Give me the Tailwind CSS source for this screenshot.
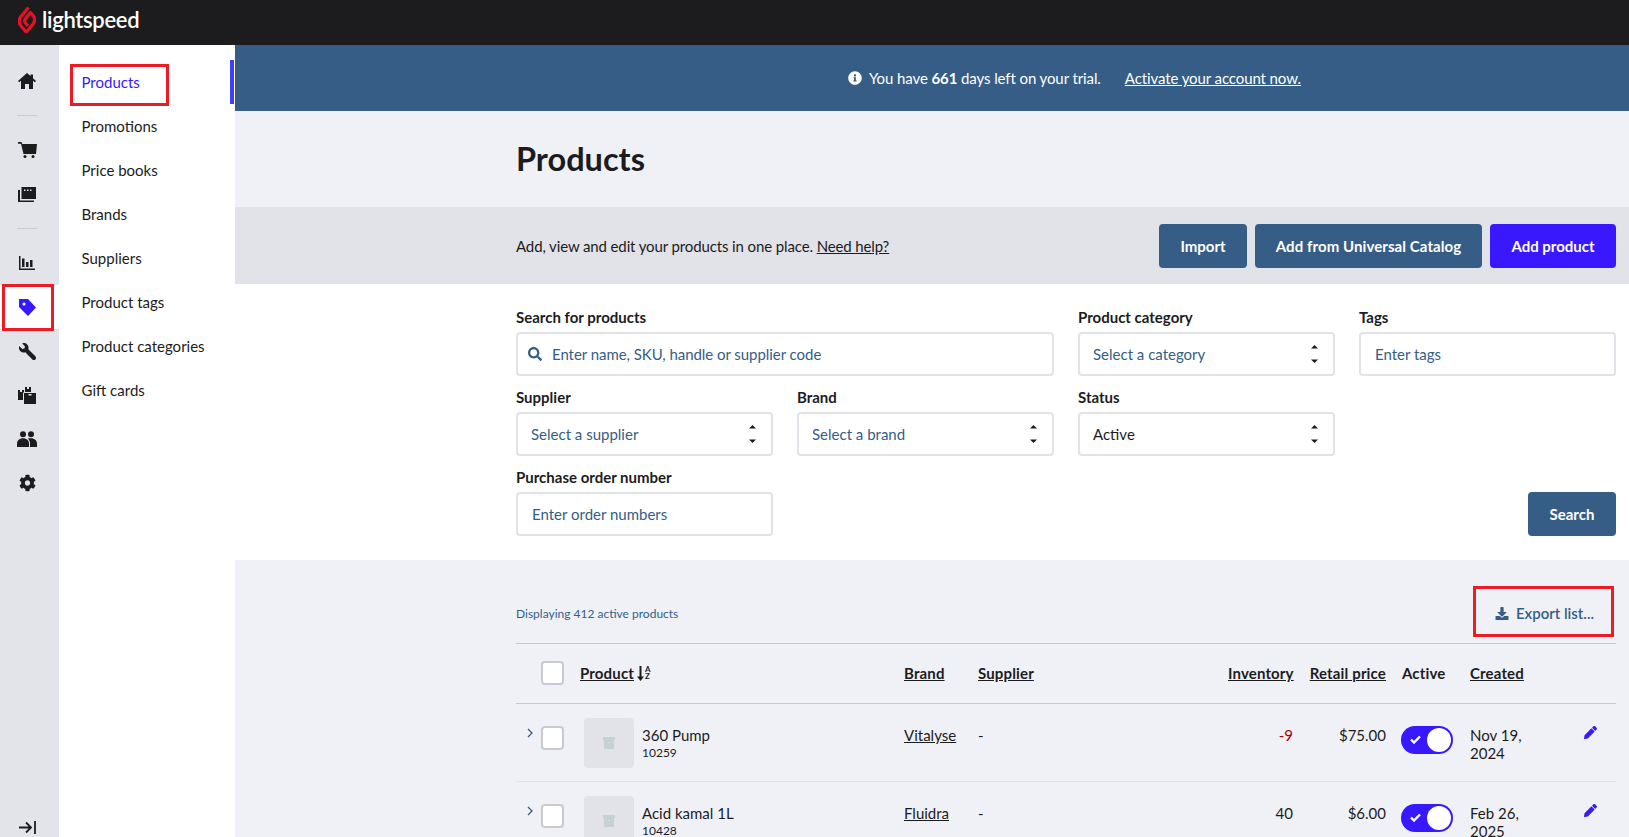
<!DOCTYPE html>
<html lang="en">
<head>
  <meta charset="UTF-8">
  <title>Products</title>
  <script src="https://cdn.jsdelivr.net/npm/@tailwindcss/browser@4"></script>
</head>
<body class="h-[837px] overflow-hidden bg-white font-[Lato,sans-serif] text-[15px] text-[#1c1c1e]">
  <!-- top bar -->
  <header class="h-[45px] bg-[#1c1c1e] flex items-center pl-[18px]">
    <svg class="w-[18px] h-[28px] mt-[-5px]" viewBox="0 0 18 28" fill="none" stroke="#e81123" stroke-width="3.200" stroke-linejoin="round">
      <path d="M10.500 1.500 3 10.500c-2.600 3.200-2.200 7 .3 9.800l5.200 6.200"/>
      <path d="M8 26.500l6.700-8c2.600-3.100 2.400-6.600 0-9.400l-2.200-2.600-5 6.200c-1.200 1.600-1 3.200 0 4.400l2.400 2.900"/>
    </svg>
    <span class="ml-[6px] text-[22px] leading-none font-semibold text-white tracking-[-0.3px] mt-[-5px]">lightspeed</span>
  </header>

  <div class="flex h-[792px]">
    <!-- icon rail -->
    <nav class="relative w-[59px] shrink-0 bg-[#e3e4e9] pt-[14px] text-[#1c1c1e]">
      <div class="h-[44px] flex items-center justify-center pr-[5px]">
        <svg class="w-[18px] h-[16px]" viewBox="0 0 18 16" fill="currentColor"><path d="M9 0 0 8l1.200 1.200L3 7.700V16h4v-5h4v5h4V7.700l1.800 1.500L18 8l-3-2.700V1.500h-2.500v1.600z"/></svg>
      </div>
      <div class="ml-[17px] mr-[22px] my-[12px] h-px bg-[#c9cad0]"></div>
      <div class="h-[44px] flex items-center justify-center pr-[5px]">
        <svg class="w-[19px] h-[16px]" viewBox="0 0 19 16" fill="currentColor"><path d="M0 0h3.500l.8 2H19l-1 10H5.500L3 1.800H0z"/><circle cx="7" cy="14.500" r="1.500"/><circle cx="15" cy="14.500" r="1.500"/></svg>
      </div>
      <div class="h-[44px] flex items-center justify-center pr-[5px]">
        <svg class="w-[18px] h-[15px]" viewBox="0 0 18 15" fill="currentColor"><path fill-rule="evenodd" d="M3.500 0H18v12H3.500zM6 2.500V4h1.500V2.500zM9 2.500V4h1.500V2.500zM12 2.500V4h1.500V2.500z"/><path d="M0 3h2v10.500h14V15H0z"/></svg>
      </div>
      <div class="ml-[17px] mr-[22px] my-[12px] h-px bg-[#c9cad0]"></div>
      <div class="h-[44px] flex items-center justify-center pr-[5px]">
        <svg class="w-[16px] h-[14px]" viewBox="0 0 16 14" fill="currentColor"><path d="M0 0h1.500v12.500H16V14H0zM3 2.500h2.500V11H3zM7 6h2.500v5H7zM11 4h2.500v7H11z"/></svg>
      </div>
      <div class="h-[44px] bg-white flex items-center justify-center pr-[5px]">
        <svg class="w-[17px] h-[17px]" viewBox="0 0 17 17" fill="#3719ff"><path fill-rule="evenodd" d="M0 0h9l8 8.500L9 17 0 8zM5 3.500a1.500 1.500 0 1 0 0 3 1.500 1.500 0 0 0 0-3z"/></svg>
      </div>
      <div class="h-[44px] flex items-center justify-center pr-[5px]">
        <svg class="w-[17px] h-[17px]" viewBox="0 0 512 512" fill="currentColor"><g transform="matrix(-1 0 0 1 512 0)"><path d="M507.730 109.100c-2.240-9.030-13.540-12.090-20.120-5.510l-74.360 74.360-67.880-11.310-11.310-67.880 74.360-74.360c6.620-6.620 3.430-17.900-5.660-20.160-47.380-11.740-99.550.91-136.580 37.930-39.640 39.640-50.550 97.100-34.050 147.200L18.740 402.760c-24.990 24.990-24.990 65.510 0 90.500 24.990 24.990 65.510 24.990 90.500 0l213.210-213.210c50.120 16.710 107.470 5.680 147.370-34.220 37.070-37.070 49.700-89.320 37.910-136.730z"/></g></svg>
      </div>
      <div class="h-[44px] flex items-center justify-center pr-[5px]">
        <svg class="w-[18px] h-[17px]" viewBox="0 0 18 17" fill="currentColor"><path d="M0 3h2v2h2V3h2v2.500H5V13H0zM7 0h2v2h2V0h2v5H7z"/><path fill-rule="evenodd" d="M6 6h12v11H6zM10.500 7v1.500h3V7z"/></svg>
      </div>
      <div class="h-[44px] flex items-center justify-center pr-[5px]">
        <svg class="w-[20px] h-[16px]" viewBox="0 0 20 16" fill="currentColor"><circle cx="6" cy="3.200" r="3"/><circle cx="14" cy="3.200" r="3"/><path d="M0 16v-3.500C0 9.500 2.500 7.200 6 7.200s6 2.300 6 5.300V16z"/><path d="M13 16v-3.500c0-2-.8-3.700-2.200-4.900.9-.3 2-.4 3.200-.4 3.500 0 6 2.300 6 5.300V16z"/></svg>
      </div>
      <div class="h-[44px] flex items-center justify-center pr-[5px]">
        <svg class="w-[17px] h-[18px]" viewBox="0 0 512 512" fill="currentColor"><path d="M487.400 315.700l-42.600-24.600c4.300-23.200 4.300-47 0-70.200l42.600-24.600c4.900-2.800 7.100-8.600 5.500-14-11.100-35.600-30-67.800-54.700-94.600-3.800-4.100-10-5.100-14.800-2.300L380.800 110c-17.900-15.400-38.500-27.300-60.800-35.100V25.800c0-5.600-3.900-10.500-9.400-11.700-36.700-8.200-74.300-7.800-109.200 0-5.500 1.200-9.400 6.100-9.400 11.700V75c-22.200 7.900-42.800 19.800-60.800 35.100L88.700 85.500c-4.900-2.800-11-1.900-14.800 2.300-24.700 26.700-43.600 58.900-54.700 94.600-1.700 5.400.6 11.200 5.500 14L67.300 221c-4.300 23.200-4.300 47 0 70.200l-42.600 24.600c-4.900 2.800-7.100 8.600-5.500 14 11.100 35.600 30 67.800 54.700 94.600 3.800 4.100 10 5.100 14.800 2.300l42.600-24.600c17.900 15.400 38.500 27.300 60.800 35.100v49.200c0 5.600 3.900 10.500 9.400 11.700 36.700 8.200 74.300 7.800 109.200 0 5.500-1.200 9.400-6.100 9.400-11.700v-49.200c22.200-7.900 42.800-19.800 60.800-35.100l42.600 24.600c4.900 2.800 11 1.900 14.800-2.300 24.700-26.700 43.600-58.900 54.700-94.600 1.500-5.500-.7-11.300-5.600-14.100zM256 336c-44.100 0-80-35.900-80-80s35.900-80 80-80 80 35.900 80 80-35.900 80-80 80z"/></svg>
      </div>
      <div class="absolute left-0 right-0 bottom-[3px] flex justify-center pr-[5px]">
        <svg class="w-[17px] h-[13px]" viewBox="0 0 17 13" fill="none" stroke="currentColor" stroke-width="1.800"><path d="M0 6.500h11M7 1.500l5 5-5 5"/><path d="M16 0v13"/></svg>
      </div>
      <div class="absolute left-[2px] top-[239px] w-[52px] h-[47px] border-[3px] border-[#ed1c24]"></div>
    </nav>

    <!-- section nav -->
    <nav class="relative w-[176px] shrink-0 bg-white pt-[16px]">
      <a class="h-[44px] flex items-center pl-[22.500px] pb-[2px] text-[#3719ff]">Products</a>
      <a class="h-[44px] flex items-center pl-[22.500px] pb-[2px]">Promotions</a>
      <a class="h-[44px] flex items-center pl-[22.500px] pb-[2px]">Price books</a>
      <a class="h-[44px] flex items-center pl-[22.500px] pb-[2px]">Brands</a>
      <a class="h-[44px] flex items-center pl-[22.500px] pb-[2px]">Suppliers</a>
      <a class="h-[44px] flex items-center pl-[22.500px] pb-[2px]">Product tags</a>
      <a class="h-[44px] flex items-center pl-[22.500px] pb-[2px]">Product categories</a>
      <a class="h-[44px] flex items-center pl-[22.500px] pb-[2px]">Gift cards</a>
      <div class="absolute right-[1px] top-[15px] w-[4px] h-[44px] bg-[#3f3fff]"></div>
      <div class="absolute left-[11px] top-[19px] w-[99px] h-[42px] border-[3px] border-[#ed1c24]"></div>
    </nav>

    <!-- main -->
    <main class="flex-1 bg-[#f0f1f6] overflow-hidden">
      <div class="h-[66px] bg-[#365d86] text-white flex items-center pl-[613px] tracking-[-0.1px]">
        <svg class="w-[14px] h-[14px] mr-[7px]" viewBox="0 0 512 512" fill="currentColor"><path d="M256 8C119.043 8 8 119.083 8 256c0 136.997 111.043 248 248 248s248-111.003 248-248C504 119.083 392.957 8 256 8zm0 110c23.196 0 42 18.804 42 42s-18.804 42-42 42-42-18.804-42-42 18.804-42 42-42zm56 254c0 6.627-5.373 12-12 12h-88c-6.627 0-12-5.373-12-12v-24c0-6.627 5.373-12 12-12h12v-64h-12c-6.627 0-12-5.373-12-12v-24c0-6.627 5.373-12 12-12h64c6.627 0 12 5.373 12 12v100h12c6.627 0 12 5.373 12 12v24z"/></svg>
        <span>You have <b class="font-bold">661</b> days left on your trial.</span>
        <a class="ml-[24px] underline">Activate your account now.</a>
      </div>

      <div class="h-[96px] pl-[281px] flex items-center">
        <h1 class="text-[32.500px] font-bold leading-none">Products</h1>
      </div>

      <div class="h-[77px] bg-[#e2e3e8] pl-[281px] pr-[13px] pt-[1px] flex items-center">
        <p class="tracking-[-0.12px]">Add, view and edit your products in one place. <a class="underline">Need help?</a></p>
        <div class="ml-auto flex gap-2">
          <button class="h-[44px] w-[88px] rounded-[4px] bg-[#365d86] text-white font-bold">Import</button>
          <button class="h-[44px] w-[227px] rounded-[4px] bg-[#365d86] text-white font-bold tracking-[0.08px]">Add from Universal Catalog</button>
          <button class="h-[44px] w-[126px] rounded-[4px] bg-[#3917ff] text-white font-bold">Add product</button>
        </div>
      </div>

      <!-- filters -->
      <section class="h-[276px] bg-white pl-[281px] pr-[13px] pt-[24px]">
        <div class="grid grid-cols-4 gap-x-6 gap-y-3">
          <label class="col-span-2 block">
            <span class="block h-[20px] mb-1 font-bold leading-[18px]">Search for products</span>
            <span class="h-[44px] flex items-center border-2 border-[#e2e3e8] rounded-[4px] bg-white px-[10px]">
              <svg class="w-[14px] h-[14px] text-[#365d86] shrink-0" viewBox="0 0 512 512" fill="currentColor"><path d="M505 442.700L405.300 343c-4.500-4.500-10.600-7-17-7H372c27.600-35.300 44-79.700 44-128C416 93.100 322.900 0 208 0S0 93.100 0 208s93.100 208 208 208c48.300 0 92.700-16.400 128-44v16.300c0 6.400 2.500 12.500 7 17l99.700 99.700c9.400 9.400 24.600 9.400 33.900 0l28.300-28.300c9.400-9.400 9.400-24.600.1-34zM208 336c-70.700 0-128-57.200-128-128 0-70.700 57.200-128 128-128 70.700 0 128 57.200 128 128 0 70.700-57.200 128-128 128z"/></svg>
              <input class="ml-[10px] flex-1 outline-none tracking-[-0.05px] placeholder:text-[#365d86]" placeholder="Enter name, SKU, handle or supplier code">
            </span>
          </label>
          <label class="block">
            <span class="block h-[20px] mb-1 font-bold leading-[18px]">Product category</span>
            <span class="relative block">
              <select class="h-[44px] w-full appearance-none border-2 border-[#e2e3e8] rounded-[4px] bg-white pl-[13px] text-[#365d86]"><option>Select a category</option></select>
              <svg class="absolute right-[17px] top-[13px] w-[7px] h-[18px] text-[#1c1c1e]" viewBox="0 0 7 18" fill="currentColor"><path d="M3.500 0 7 3.500H0zM3.500 18 0 14.500h7z"/></svg>
            </span>
          </label>
          <label class="block">
            <span class="block h-[20px] mb-1 font-bold leading-[18px]">Tags</span>
            <input class="h-[44px] w-full border-2 border-[#e2e3e8] rounded-[4px] bg-white pl-[14px] outline-none placeholder:text-[#365d86]" placeholder="Enter tags">
          </label>

          <label class="block">
            <span class="block h-[20px] mb-1 font-bold leading-[18px]">Supplier</span>
            <span class="relative block">
              <select class="h-[44px] w-full appearance-none border-2 border-[#e2e3e8] rounded-[4px] bg-white pl-[13px] text-[#365d86]"><option>Select a supplier</option></select>
              <svg class="absolute right-[17px] top-[13px] w-[7px] h-[18px] text-[#1c1c1e]" viewBox="0 0 7 18" fill="currentColor"><path d="M3.500 0 7 3.500H0zM3.500 18 0 14.500h7z"/></svg>
            </span>
          </label>
          <label class="block">
            <span class="block h-[20px] mb-1 font-bold leading-[18px]">Brand</span>
            <span class="relative block">
              <select class="h-[44px] w-full appearance-none border-2 border-[#e2e3e8] rounded-[4px] bg-white pl-[13px] text-[#365d86]"><option>Select a brand</option></select>
              <svg class="absolute right-[17px] top-[13px] w-[7px] h-[18px] text-[#1c1c1e]" viewBox="0 0 7 18" fill="currentColor"><path d="M3.500 0 7 3.500H0zM3.500 18 0 14.500h7z"/></svg>
            </span>
          </label>
          <label class="block">
            <span class="block h-[20px] mb-1 font-bold leading-[18px]">Status</span>
            <span class="relative block">
              <select class="h-[44px] w-full appearance-none border-2 border-[#e2e3e8] rounded-[4px] bg-white pl-[13px]"><option>Active</option></select>
              <svg class="absolute right-[17px] top-[13px] w-[7px] h-[18px] text-[#1c1c1e]" viewBox="0 0 7 18" fill="currentColor"><path d="M3.500 0 7 3.500H0zM3.500 18 0 14.500h7z"/></svg>
            </span>
          </label>
          <div></div>

          <label class="block">
            <span class="block h-[20px] mb-1 font-bold leading-[18px]">Purchase order number</span>
            <input class="h-[44px] w-full border-2 border-[#e2e3e8] rounded-[4px] bg-white pl-[14px] outline-none placeholder:text-[#365d86]" placeholder="Enter order numbers">
          </label>
          <div class="col-start-4 flex items-end justify-end">
            <button class="h-[44px] w-[88px] rounded-[4px] bg-[#365d86] text-white font-bold">Search</button>
          </div>
        </div>
      </section>

      <!-- product list -->
      <section class="pl-[281px] pr-[13px]">
        <div class="relative h-[84px] flex items-center justify-between pt-[25px] border-b border-[#c9cad0]">
          <span class="text-[12px] text-[#365d86]">Displaying 412 active products</span>
          <a class="flex items-center font-semibold text-[#365d86] mr-[22px] mb-[2px]">
            <svg class="w-[14px] h-[13px] mr-[7px]" viewBox="0 0 512 512" fill="currentColor"><path d="M216 0h80c13.300 0 24 10.700 24 24v168h87.700c17.800 0 26.700 21.500 14.100 34.100L269.700 378.300c-7.500 7.500-19.800 7.500-27.300 0L90.100 226.100c-12.600-12.600-3.700-34.100 14.100-34.100H192V24c0-13.300 10.700-24 24-24zm296 376v112c0 13.300-10.700 24-24 24H24c-13.300 0-24-10.700-24-24V376c0-13.300 10.700-24 24-24h146.700l49 49c20.100 20.100 52.500 20.100 72.600 0l49-49H488c13.300 0 24 10.700 24 24z"/></svg>
            Export list...
          </a>
          <div class="absolute right-[2px] top-[26px] w-[141px] h-[51px] border-[3px] border-[#ed1c24]"></div>
        </div>

        <table class="w-full table-fixed border-collapse">
          <colgroup>
            <col class="w-[56px]"><col class="w-[324px]"><col class="w-[74px]"><col class="w-[250px]"><col class="w-[81px]"><col class="w-[93px]"><col class="w-[68px]"><col class="w-[90px]"><col class="w-[64px]">
          </colgroup>
          <thead>
            <tr class="h-[59px] border-b border-[#c9cad0] text-left tracking-[0.15px]">
              <th class="pl-[25px]"><input type="checkbox" class="block appearance-none w-[23px] h-[24px] border-2 border-[#c9cad0] rounded-[4px] bg-white"></th>
              <th class="px-2 font-bold">
                <span class="inline-flex items-center"><span class="underline">Product</span>
                  <svg class="ml-[3px] w-[7px] h-[15px]" viewBox="0 0 7 15" fill="currentColor"><path d="M2.500 0h2v10.500H7L3.500 15 0 10.500h2.500z"/></svg>
                  <span class="ml-[1px] flex flex-col text-[8px] leading-[7.500px] font-bold"><span>A</span><span>Z</span></span>
                </span>
              </th>
              <th class="px-2 font-bold underline">Brand</th>
              <th class="px-2 font-bold underline">Supplier</th>
              <th class="px-2 font-bold underline text-right">Inventory</th>
              <th class="px-2 font-bold underline text-right">Retail price</th>
              <th class="px-2 font-bold">Active</th>
              <th class="px-2 font-bold underline">Created</th>
              <th></th>
            </tr>
          </thead>
          <tbody>
            <tr class="h-[78px] border-b border-[#e2e3e8] align-top">
              <td class="relative pl-[25px] pt-[22px]">
                <svg class="absolute left-[11px] top-[24px] w-[6px] h-[10px] text-[#365d86]" viewBox="0 0 6 10" fill="none" stroke="currentColor" stroke-width="1.300"><path d="M1 1l4 4-4 4"/></svg>
                <input type="checkbox" class="block appearance-none w-[23px] h-[24px] border-2 border-[#c9cad0] rounded-[4px] bg-white">
              </td>
              <td class="pl-[12px] pr-2 pt-[14px]">
                <div class="flex">
                  <div class="w-[50px] h-[50px] rounded-[4px] bg-[#e2e3e8] flex items-center justify-center">
                    <svg class="w-[12px] h-[12px]" viewBox="0 0 12 12" fill="#c5d2d2"><path fill-rule="evenodd" d="M0 0h12v3H0zM1 3h10v9H1zM5 5v.8h2V5z"/></svg>
                  </div>
                  <div class="ml-[8px] pt-[7px]">
                    <div class="leading-[20px]">360 Pump</div>
                    <div class="text-[12px] leading-[16px]">10259</div>
                  </div>
                </div>
              </td>
              <td class="px-2 pt-[21px] underline leading-[20px]">Vitalyse</td>
              <td class="px-2 pt-[21px] leading-[20px]">-</td>
              <td class="px-2 pt-[21px] text-right text-[#a50000] leading-[20px]">-9</td>
              <td class="px-2 pt-[21px] text-right leading-[20px]">$75.00</td>
              <td class="pl-[7px] pt-[22px]">
                <div class="w-[52px] h-[28px] rounded-full bg-[#3719ff] flex items-center justify-between pl-[9px] pr-[2px]">
                  <svg class="w-[11px] h-[9px]" viewBox="0 0 11 9" fill="none" stroke="white" stroke-width="2.400"><path d="M1 4.500l3 3 6-6"/></svg>
                  <div class="w-[24px] h-[24px] rounded-full bg-white"></div>
                </div>
              </td>
              <td class="px-2 pt-[22px] leading-[18.500px]">Nov 19, 2024</td>
              <td class="pt-[22px] pl-[32px]">
                <svg class="w-[13px] h-[13px]" viewBox="0 0 512 512" fill="#3719ff"><path d="M497.900 142.100l-46.100 46.100c-4.700 4.700-12.300 4.700-17 0l-111-111c-4.700-4.700-4.700-12.300 0-17l46.100-46.100c18.700-18.700 49.100-18.700 67.900 0l60.100 60.100c18.800 18.700 18.800 49.100 0 67.900zM284.200 99.800L21.600 362.400.4 483.900c-2.900 16.400 11.400 30.600 27.800 27.800l121.500-21.300 262.600-262.600c4.700-4.700 4.700-12.300 0-17l-111-111c-4.800-4.700-12.400-4.700-17.100 0z"/></svg>
              </td>
            </tr>
            <tr class="h-[78px] border-b border-[#e2e3e8] align-top">
              <td class="relative pl-[25px] pt-[22px]">
                <svg class="absolute left-[11px] top-[24px] w-[6px] h-[10px] text-[#365d86]" viewBox="0 0 6 10" fill="none" stroke="currentColor" stroke-width="1.300"><path d="M1 1l4 4-4 4"/></svg>
                <input type="checkbox" class="block appearance-none w-[23px] h-[24px] border-2 border-[#c9cad0] rounded-[4px] bg-white">
              </td>
              <td class="pl-[12px] pr-2 pt-[14px]">
                <div class="flex">
                  <div class="w-[50px] h-[50px] rounded-[4px] bg-[#e2e3e8] flex items-center justify-center">
                    <svg class="w-[12px] h-[12px]" viewBox="0 0 12 12" fill="#c5d2d2"><path fill-rule="evenodd" d="M0 0h12v3H0zM1 3h10v9H1zM5 5v.8h2V5z"/></svg>
                  </div>
                  <div class="ml-[8px] pt-[7px]">
                    <div class="leading-[20px]">Acid kamal 1L</div>
                    <div class="text-[12px] leading-[16px]">10428</div>
                  </div>
                </div>
              </td>
              <td class="px-2 pt-[21px] underline leading-[20px]">Fluidra</td>
              <td class="px-2 pt-[21px] leading-[20px]">-</td>
              <td class="px-2 pt-[21px] text-right leading-[20px]">40</td>
              <td class="px-2 pt-[21px] text-right leading-[20px]">$6.00</td>
              <td class="pl-[7px] pt-[22px]">
                <div class="w-[52px] h-[28px] rounded-full bg-[#3719ff] flex items-center justify-between pl-[9px] pr-[2px]">
                  <svg class="w-[11px] h-[9px]" viewBox="0 0 11 9" fill="none" stroke="white" stroke-width="2.400"><path d="M1 4.500l3 3 6-6"/></svg>
                  <div class="w-[24px] h-[24px] rounded-full bg-white"></div>
                </div>
              </td>
              <td class="px-2 pt-[22px] leading-[18.500px]">Feb 26, 2025</td>
              <td class="pt-[22px] pl-[32px]">
                <svg class="w-[13px] h-[13px]" viewBox="0 0 512 512" fill="#3719ff"><path d="M497.900 142.100l-46.100 46.100c-4.700 4.700-12.300 4.700-17 0l-111-111c-4.700-4.700-4.700-12.300 0-17l46.100-46.100c18.700-18.700 49.100-18.700 67.900 0l60.100 60.100c18.800 18.700 18.800 49.100 0 67.900zM284.200 99.800L21.600 362.400.4 483.900c-2.900 16.400 11.400 30.600 27.800 27.800l121.500-21.300 262.600-262.600c4.700-4.700 4.700-12.300 0-17l-111-111c-4.800-4.700-12.400-4.700-17.100 0z"/></svg>
              </td>
            </tr>
          </tbody>
        </table>
      </section>
    </main>
  </div>
</body>
</html>
